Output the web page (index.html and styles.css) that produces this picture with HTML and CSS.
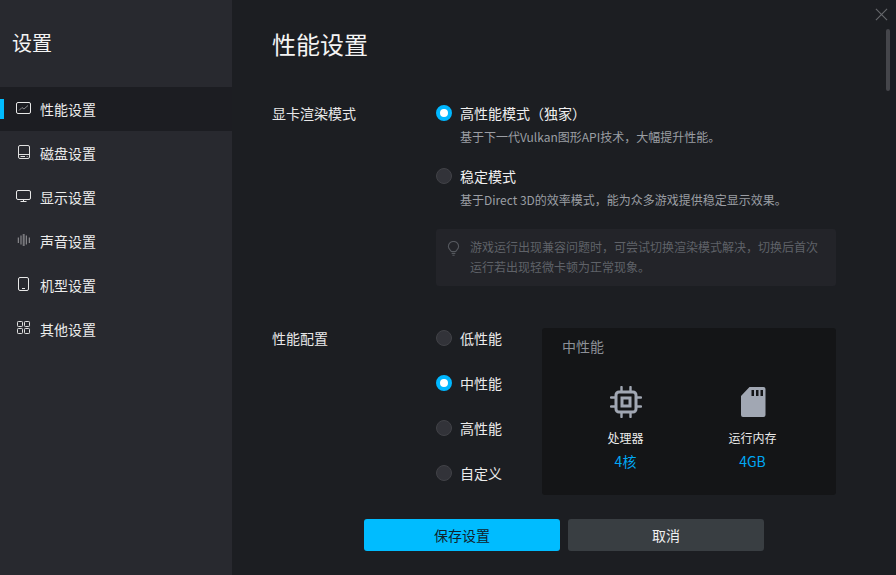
FILE: index.html
```html
<!DOCTYPE html>
<html lang="zh-CN">
  <head>
    <meta charset="UTF-8" />
    <title>设置</title>
    <link rel="stylesheet" href="styles.css">
  </head>
  <body>
    <div class="settings-window">
      <aside class="sidebar">
        <div class="sidebar-title">设置</div>
        <nav class="side-nav">
          <a class="nav-item active">
            <svg class="nav-icon" viewBox="0 0 16 16" fill="none">
              <rect x="0.5" y="1.5" width="14" height="11" rx="1.5" stroke="#e8e8e8"/>
              <path d="M3 9.500 6 6.500 8 8 12 4.500" stroke="#8a8a8e"/>
            </svg>
            <span>性能设置</span>
          </a>
          <a class="nav-item">
            <svg class="nav-icon" viewBox="0 0 16 16" fill="none">
              <rect x="2.5" y="0.5" width="11" height="13" rx="1.5" stroke="#e0e0e0"/>
              <path d="M3 9.500H13M4.500 11.500H9" stroke="#e0e0e0"/>
              <path d="M10.500 11.500H12" stroke="#8a8a8e"/>
            </svg>
            <span>磁盘设置</span>
          </a>
          <a class="nav-item">
            <svg class="nav-icon" viewBox="0 0 16 16" fill="none">
              <rect x="0.5" y="1.5" width="14" height="9" rx="1.5" stroke="#e8e8e8"/>
              <path d="M7.500 11V12.500M4.500 12.500H10.500" stroke="#e8e8e8"/>
            </svg>
            <span>显示设置</span>
          </a>
          <a class="nav-item">
            <svg class="nav-icon" viewBox="0 0 16 16" fill="none">
              <path d="M2.300 4.500V10M5 2.500V11.500M10.300 2.500V11.500M13.300 4.500V10" stroke="#9a9a9e"/>
              <path d="M7.700 1V13" stroke="#77777b" stroke-width="2"/>
            </svg>
            <span>声音设置</span>
          </a>
          <a class="nav-item">
            <svg class="nav-icon" viewBox="0 0 16 16" fill="none">
              <rect x="2.5" y="0.5" width="10" height="13" rx="1.5" stroke="#e8e8e8"/>
              <path d="M6 11.500H9" stroke="#e8e8e8"/>
            </svg>
            <span>机型设置</span>
          </a>
          <a class="nav-item">
            <svg class="nav-icon" viewBox="0 0 16 16" fill="none" stroke="#e0e0e0">
              <rect x="1.5" y="0.5" width="5" height="5" rx="0.8"/>
              <rect x="8.5" y="0.5" width="5" height="5" rx="0.8"/>
              <rect x="1.5" y="7.5" width="5" height="5" rx="0.8"/>
              <rect x="8.5" y="7.5" width="5" height="5" rx="0.8"/>
            </svg>
            <span>其他设置</span>
          </a>
        </nav>
      </aside>

      <main class="content">
        <h1 class="page-title">性能设置</h1>

        <section class="setting-row render-row">
          <div class="setting-label">显卡渲染模式</div>
          <div class="setting-body">
            <div class="mode-option">
              <span class="radio checked"></span>
              <div class="mode-text">
                <div class="mode-name">高性能模式（独家）</div>
                <div class="mode-desc">基于下一代Vulkan图形API技术，大幅提升性能。</div>
              </div>
            </div>
            <div class="mode-option">
              <span class="radio"></span>
              <div class="mode-text">
                <div class="mode-name">稳定模式</div>
                <div class="mode-desc">基于Direct 3D的效率模式，能为众多游戏提供稳定显示效果。</div>
              </div>
            </div>
            <div class="tip-box">
              <svg class="tip-icon" viewBox="0 0 14 16" fill="none" stroke="#55585e" stroke-width="1.2">
                <path d="M4.600 11.200C4.400 9.800 1.500 8.900 1.500 5.900A5.300 5.300 0 0 1 12.500 5.900C12.500 8.900 9.600 9.800 9.400 11.200Z"/>
                <path d="M5 13.300H9M5.800 15.200H8.200"/>
              </svg>
              <p>游戏运行出现兼容问题时，可尝试切换渲染模式解决，切换后首次运行若出现轻微卡顿为正常现象。</p>
            </div>
          </div>
        </section>

        <section class="setting-row perf-row">
          <div class="setting-label">性能配置</div>
          <div class="perf-options">
            <div class="perf-option"><span class="radio"></span>低性能</div>
            <div class="perf-option"><span class="radio checked"></span>中性能</div>
            <div class="perf-option"><span class="radio"></span>高性能</div>
            <div class="perf-option"><span class="radio"></span>自定义</div>
          </div>
          <div class="perf-panel">
            <div class="panel-title">中性能</div>
            <div class="spec-list">
              <div class="spec">
                <svg class="spec-icon" viewBox="0 0 32 32" fill="none" stroke="#a1a7b3">
                  <rect x="6" y="6" width="20" height="20" rx="3" stroke-width="3"/>
                  <rect x="12" y="12" width="8" height="8" stroke-width="3"/>
                  <path d="M11.500 1V5M20.500 1V5M11.500 27V31M20.500 27V31M1 11.500H5M1 20.500H5M27 11.500H31M27 20.500H31" stroke-width="2.400" stroke-linecap="round"/>
                </svg>
                <div class="spec-name">处理器</div>
                <div class="spec-value">4核</div>
              </div>
              <div class="spec">
                <svg class="spec-icon" viewBox="0 0 32 32">
                  <path fill-rule="evenodd" fill="#a1a7b3" d="M12.500 1H26.500A2 2 0 0 1 28.500 3V29A2 2 0 0 1 26.500 31H6A2 2 0 0 1 4 29V10ZM14.500 4V10H17V4ZM19 4V10H21.500V4ZM23.500 4V10H26V4Z"/>
                </svg>
                <div class="spec-name">运行内存</div>
                <div class="spec-value">4GB</div>
              </div>
            </div>
          </div>
        </section>

        <footer class="actions">
          <button class="btn btn-primary">保存设置</button>
          <button class="btn btn-cancel">取消</button>
        </footer>
      </main>

      <svg class="close-btn" viewBox="0 0 14 14" fill="none" stroke="#66686c" stroke-width="1.2">
        <path d="M1 1 13 13M13 1 1 13"/>
      </svg>
      <div class="scroll-thumb"></div>
    </div>
  </body>
</html>
```

FILE: styles.css
```css
html,
body {
  margin: 0;
  height: 100%;
  overflow: hidden;
}
body {
  font-family: "Noto Sans CJK SC", "Noto Sans", sans-serif;
  background: #1c1e22;
  color: #f0f0f0;
}
.settings-window {
  position: relative;
  display: flex;
  width: 896px;
  height: 575px;
}

/* sidebar */
.sidebar {
  width: 232px;
  flex-shrink: 0;
  background: #28292f;
}
.sidebar-title {
  height: 87px;
  line-height: 86px;
  padding-left: 12px;
  font-size: 20px;
  color: #f4f4f4;
}
.nav-item {
  position: relative;
  display: flex;
  align-items: center;
  gap: 8px;
  height: 44px;
  padding-left: 16px;
  font-size: 14px;
  color: #ececec;
}
.nav-item.active {
  background: #1c1d22;
}
.nav-item.active::before {
  content: "";
  position: absolute;
  left: 0;
  top: 12px;
  width: 4px;
  height: 20px;
  background: #00bcff;
}
.nav-icon {
  width: 16px;
  height: 16px;
}

/* main column */
.content {
  flex: 1;
  display: flex;
  flex-direction: column;
  box-sizing: border-box;
  padding: 0 60px 24px 40px;
}
.page-title {
  margin: 0;
  height: 105px;
  padding-top: 26px;
  box-sizing: border-box;
  font-size: 24px;
  font-weight: 400;
  line-height: 36px;
  color: #f4f4f4;
}
.setting-row {
  display: flex;
}
.setting-label {
  width: 164px;
  flex-shrink: 0;
  font-size: 14px;
  line-height: 20px;
  color: #e8e8e8;
}
.render-row .setting-label {
  margin-top: -2px;
}
.perf-row .setting-label {
  margin-top: -1px;
}
.setting-body {
  flex: 1;
}
.mode-option {
  display: flex;
  gap: 8px;
  height: 63px;
}
.mode-text {
  margin-top: -2px;
}
.radio {
  box-sizing: border-box;
  flex-shrink: 0;
  width: 16px;
  height: 16px;
  border-radius: 50%;
  background: #323339;
  border: 1px solid #414247;
}
.radio.checked {
  background: #fff;
  border: 4px solid #00b7ff;
}
.mode-name {
  font-size: 14px;
  line-height: 20px;
  color: #f0f0f0;
}
.mode-desc {
  margin-top: 4px;
  font-size: 12px;
  line-height: 20px;
  color: #9b9ea4;
}
.tip-box {
  display: flex;
  gap: 10px;
  box-sizing: border-box;
  height: 57px;
  margin-top: -2px;
  padding: 8px 12px 0 11px;
  background: #232429;
  border-radius: 3px;
}
.tip-icon {
  width: 13px;
  height: 15px;
  margin-top: 4px;
  flex-shrink: 0;
}
.tip-box p {
  margin: 0;
  font-size: 12px;
  line-height: 20px;
  color: #5f6268;
}
.perf-row {
  margin-top: 43px;
}
.perf-options {
  width: 106px;
  flex-shrink: 0;
  margin-top: -14px;
}
.perf-option {
  display: flex;
  align-items: center;
  gap: 8px;
  height: 45px;
  font-size: 14px;
  color: #ececec;
}
.perf-panel {
  flex: 1;
  box-sizing: border-box;
  height: 167px;
  padding: 8px 20px 0;
  background: #141517;
  border-radius: 3px;
  margin-top: -1px;
}
.panel-title {
  font-size: 14px;
  line-height: 20px;
  color: #8c9098;
}
.spec-list {
  display: flex;
  margin-top: 30px;
}
.spec {
  width: 127px;
  text-align: center;
}
.spec-icon {
  display: block;
  width: 32px;
  height: 32px;
  margin: 0 auto;
}
.spec-name {
  margin-top: 10px;
  font-size: 12px;
  line-height: 20px;
  color: #ececec;
}
.spec-value {
  margin-top: 3px;
  font-size: 14px;
  line-height: 20px;
  color: #00a8f5;
}

/* buttons */
.actions {
  display: flex;
  justify-content: center;
  gap: 8px;
  margin-top: auto;
  margin-right: -20px;
}
.btn {
  width: 196px;
  height: 32px;
  border: none;
  border-radius: 3px;
  font-family: inherit;
  font-size: 14px;
  cursor: pointer;
}
.btn-primary {
  background: #00bcff;
  color: #10232c;
}
.btn-cancel {
  background: #393e42;
  color: #f0f0f0;
}

/* window chrome */
.close-btn {
  position: absolute;
  right: 8px;
  top: 8px;
  width: 13px;
  height: 13px;
}
.scroll-thumb {
  position: absolute;
  left: 886px;
  top: 29px;
  width: 4px;
  height: 62px;
  border-radius: 2px;
  background: #45464b;
}
```
